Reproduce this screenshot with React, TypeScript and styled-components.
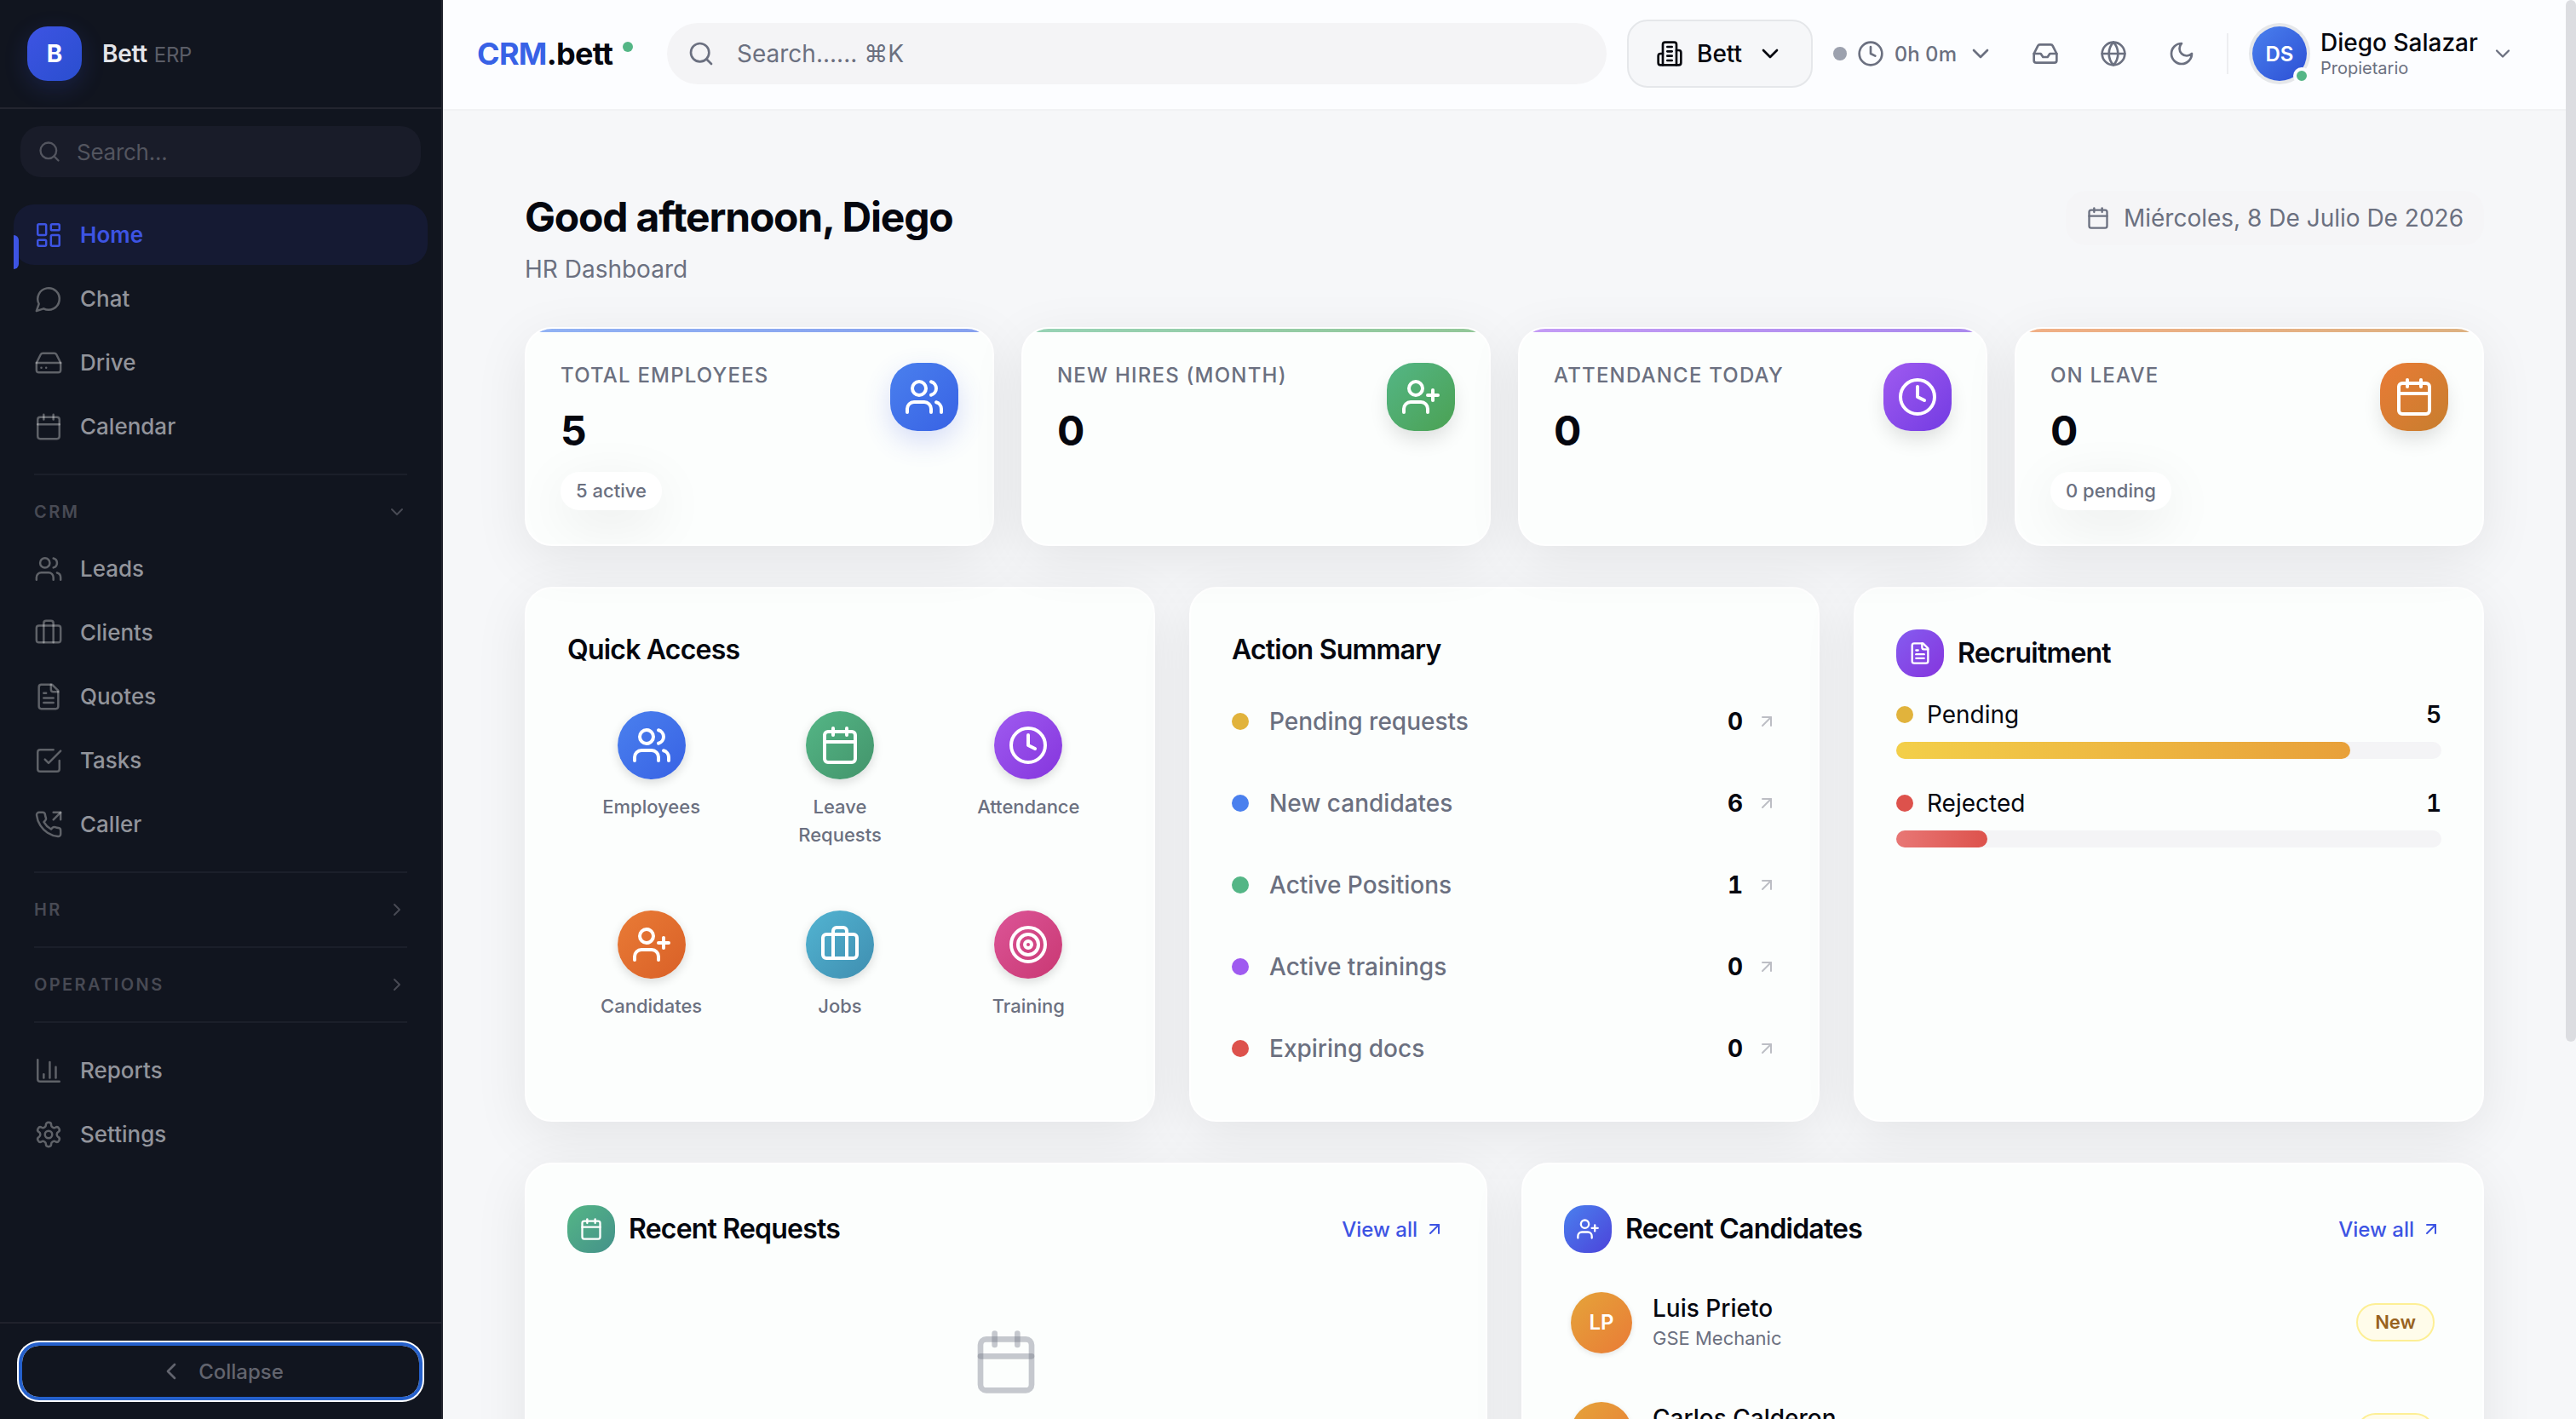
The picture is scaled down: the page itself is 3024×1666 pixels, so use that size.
import React from 'react'
import styled, { createGlobalStyle, css } from 'styled-components'
import {
    ArrowUpRight,
    Briefcase,
    Calendar,
    ChevronDown,
    ChevronLeft,
    ChevronRight,
    Clock,
    Globe,
    Search,
    Target,
    UserPlus,
    Users,
} from 'lucide-react'

const GlobalStyle = createGlobalStyle`
    *, *::before, *::after {
        box-sizing: border-box;
    }
    body {
        margin: 0;
        overflow: hidden;
        background: #f6f7f9;
        color: #05070f;
        font-family: Inter, "Liberation Sans", sans-serif;
        -webkit-font-smoothing: antialiased;
    }
    h1, h2, p {
        margin: 0;
    }
    button {
        font-family: inherit;
    }
    svg {
        flex-shrink: 0;
    }
`

const Shell = styled.div`
    display: flex;
    height: 1666px;
    overflow: hidden;
`

/* Sidebar */

const Sidebar = styled.aside`
    display: flex;
    flex-direction: column;
    width: 520px;
    flex-shrink: 0;
    background: #11151f;
    border-right: 2px solid #23252f;
`

const Brand = styled.div`
    display: flex;
    align-items: center;
    gap: 24px;
    height: 128px;
    padding: 0 32px;
    border-bottom: 2px solid #23252f;
`

const BrandMark = styled.div`
    display: grid;
    place-items: center;
    width: 64px;
    height: 64px;
    border-radius: 24px;
    background: linear-gradient(135deg, #3d54e3, #2a4ecf);
    box-shadow: 0 8px 28px rgba(61, 84, 227, 0.2);
    color: #fff;
    font-size: 28px;
    font-weight: 700;
`

const BrandName = styled.div`
    color: #e3e4e8;
    font-size: 28px;
    font-weight: 600;
    letter-spacing: -0.01em;
    span {
        margin-left: 8px;
        color: #5b5d67;
        font-size: 24px;
        font-weight: 400;
    }
`

const SideSearch = styled.div`
    display: flex;
    align-items: center;
    gap: 18px;
    height: 60px;
    margin: 20px 24px 32px;
    padding: 0 20px;
    border-radius: 24px;
    background: #191c29;
    color: #53555f;
    font-size: 26px;
    letter-spacing: -0.01em;
`

const Nav = styled.nav`
    display: flex;
    flex-direction: column;
    gap: 4px;
    padding: 0 16px;
`

const NavItem = styled.a<{ $active?: boolean }>`
    position: relative;
    display: flex;
    align-items: center;
    gap: 20px;
    height: 71px;
    padding: 0 24px;
    border-radius: 24px;
    color: #92949b;
    font-size: 26px;
    font-weight: 500;
    svg {
        color: rgba(255, 255, 255, 0.33);
    }
    ${props => props.$active && css`
        background: #151a33;
        color: #3d54e3;
        font-weight: 600;
        svg {
            color: #3d54e3;
        }
        &::before {
            content: '';
            position: absolute;
            left: 0;
            top: 50%;
            width: 6px;
            height: 40px;
            border-radius: 0 6px 6px 0;
            background: #3d54e3;
        }
    `}
`

const NavRule = styled.div<{ $top?: number, $bottom?: number }>`
    height: 2px;
    margin: ${props => props.$top || 0}px 40px ${props => props.$bottom || 0}px;
    background: #1b1f2a;
`

const NavHeading = styled.div<{ $height?: number }>`
    display: flex;
    align-items: center;
    justify-content: space-between;
    height: ${props => props.$height || 86}px;
    padding: 0 40px;
    color: #484a54;
    font-size: 20px;
    font-weight: 600;
    letter-spacing: 0.12em;
`

const NavSection = styled.div`
    margin-top: -12px;
`

const SideFooter = styled.div`
    display: flex;
    height: 114px;
    margin-top: auto;
    padding: 26px;
    border-top: 2px solid #20222c;
`

const CollapseButton = styled.button`
    display: flex;
    flex: 1;
    align-items: center;
    justify-content: center;
    gap: 16px;
    border: 0;
    border-radius: 20px;
    background: transparent;
    box-shadow: 0 0 0 4px #2560cb, 0 0 0 6px #fff;
    color: #62646e;
    font-size: 24px;
    font-weight: 500;
`

/* Top bar */

const Main = styled.div`
    display: flex;
    flex: 1;
    flex-direction: column;
    min-width: 0;
`

const TopBar = styled.header`
    display: flex;
    align-items: center;
    height: 130px;
    flex-shrink: 0;
    padding: 0 72px 2px 40px;
    border-bottom: 2px solid #f1f2f4;
    background: #fcfdff;
`

const Wordmark = styled.div`
    display: flex;
    width: 223px;
    font-size: 36px;
    font-weight: 700;
    letter-spacing: -0.02em;
    span {
        color: #3862e6;
    }
    i {
        width: 12px;
        height: 12px;
        margin: 8px 0 0 12px;
        border-radius: 50%;
        background: #54b686;
    }
`

const SearchField = styled.div`
    display: flex;
    align-items: center;
    gap: 26px;
    width: 1103px;
    height: 72px;
    padding: 0 24px;
    border-radius: 36px;
    background: #f4f4f6;
    color: #6b7080;
    font-size: 28px;
`

const CompanyButton = styled.button`
    display: flex;
    align-items: center;
    gap: 16px;
    width: 218px;
    height: 80px;
    margin-left: 24px;
    padding: 0 32px;
    border: 2px solid #e5e7ea;
    border-radius: 24px;
    background: #f6f7f9;
    color: #05070f;
    font-size: 28px;
    font-weight: 500;
    svg:last-child {
        margin-left: auto;
    }
`

const Timer = styled.div`
    display: flex;
    align-items: center;
    gap: 12px;
    width: 189px;
    margin-left: 24px;
    color: #6b7080;
    font-size: 24px;
    font-weight: 500;
    font-variant-numeric: tabular-nums;
    white-space: nowrap;
    i {
        width: 16px;
        height: 16px;
        border-radius: 50%;
        background: #9ca1ae;
    }
    svg:last-child {
        margin-left: auto;
    }
`

const IconBar = styled.div`
    display: flex;
    align-items: center;
    gap: 48px;
    margin-left: 44px;
    color: #6b7080;
`

const BarRule = styled.div`
    width: 2px;
    height: 48px;
    margin-left: 37px;
    background: #edeef1;
`

const Avatar = styled.div`
    position: relative;
    display: grid;
    place-items: center;
    width: 64px;
    height: 64px;
    margin-left: 28px;
    border-radius: 50%;
    background: linear-gradient(135deg, #4a80ee, #2c4fd4);
    box-shadow: 0 0 0 4px #e5e7ea;
    color: #fff;
    font-size: 24px;
    font-weight: 600;
    &::after {
        content: '';
        position: absolute;
        right: -4px;
        bottom: -4px;
        width: 20px;
        height: 20px;
        border: 4px solid #fcfdff;
        border-radius: 50%;
        background: #54b686;
    }
`

const Account = styled.div`
    margin-left: 16px;
    margin-right: auto;
    font-size: 28px;
    font-weight: 500;
    line-height: 34px;
    small {
        display: block;
        color: #6b7080;
        font-size: 20px;
        font-weight: 400;
        line-height: 26px;
    }
`

/* Page */

const Page = styled.main`
    display: flex;
    flex-direction: column;
    gap: 48px;
    padding: 94px 108px 0 96px;
`

const PageHead = styled.div`
    display: flex;
    align-items: flex-start;
    justify-content: space-between;
    height: 112px;
`

const Greeting = styled.h1`
    font-size: 48px;
    font-weight: 700;
    line-height: 62px;
    letter-spacing: -0.025em;
`

const Subtitle = styled.p`
    margin-top: 9px;
    color: #6b7080;
    font-size: 28px;
    line-height: 42px;
`

const DatePill = styled.div`
    display: flex;
    align-items: center;
    gap: 16px;
    height: 64px;
    padding: 0 24px;
    border-radius: 24px;
    background: #f5f5f7;
    color: #6b7080;
    font-size: 28px;
`

const Grid = styled.div<{ $columns: number, $gap: number }>`
    display: grid;
    grid-template-columns: repeat(${props => props.$columns}, 1fr);
    gap: ${props => props.$gap}px;
`

const Card = styled.section`
    border: 2px solid #fff;
    border-radius: 32px;
    background: #fcfefd;
    box-shadow: 0 16px 64px rgba(0, 0, 0, 0.08);
`

const StatCard = styled(Card)<{ $from: string, $to: string }>`
    position: relative;
    display: flex;
    justify-content: space-between;
    height: 257px;
    padding: 40px;
    overflow: hidden;
    &::before {
        content: '';
        position: absolute;
        inset: 0 0 auto;
        height: 4px;
        opacity: 0.6;
        background: linear-gradient(90deg, ${props => props.$from}, ${props => props.$to});
    }
`

const StatLabel = styled.div`
    color: #6b7080;
    font-size: 24px;
    font-weight: 500;
    line-height: 30px;
    letter-spacing: 0.05em;
`

const StatValue = styled.div`
    margin-top: 20px;
    font-size: 48px;
    font-weight: 700;
    line-height: 60px;
    letter-spacing: -0.025em;
`

const StatNote = styled.div`
    display: inline-block;
    height: 45px;
    margin-top: 18px;
    padding: 0 18px;
    border-radius: 22px;
    background: #fff;
    box-shadow: 0 16px 64px rgba(0, 0, 0, 0.08);
    color: #6b7080;
    font-size: 22px;
    font-weight: 500;
    line-height: 45px;
`

const Tile = styled.div<{ $from: string, $to: string, $size: number, $radius: string, $shadow?: string }>`
    display: grid;
    place-items: center;
    flex-shrink: 0;
    width: ${props => props.$size}px;
    height: ${props => props.$size}px;
    border-radius: ${props => props.$radius};
    background: linear-gradient(135deg, ${props => props.$from}, ${props => props.$to});
    box-shadow: ${props => props.$shadow || 'none'};
    color: #fff;
`

const Panel = styled(Card)<{ $height: number }>`
    height: ${props => props.$height}px;
    padding: 48px;
`

const PanelTitle = styled.h2`
    font-size: 32px;
    font-weight: 600;
    line-height: 48px;
    letter-spacing: -0.025em;
`

const PanelHead = styled.div`
    display: flex;
    align-items: center;
    gap: 16px;
    height: 56px;
`

const ViewAll = styled.a`
    display: flex;
    align-items: center;
    gap: 8px;
    margin-left: auto;
    color: #3d54e3;
    font-size: 24px;
    font-weight: 500;
`

const Shortcuts = styled.div`
    display: grid;
    grid-template-columns: repeat(3, 1fr);
    gap: 24px;
    margin-top: 24px;
`

const Shortcut = styled.div`
    display: flex;
    flex-direction: column;
    align-items: center;
    gap: 16px;
    padding: 24px;
    color: #6b7080;
    font-size: 22px;
    font-weight: 500;
    line-height: 33px;
    text-align: center;
`

const Actions = styled.div`
    display: flex;
    flex-direction: column;
    gap: 24px;
    margin-top: 24px;
`

const ActionRow = styled.div`
    display: flex;
    align-items: center;
    height: 72px;
    color: #6b7080;
    font-size: 28px;
    font-weight: 500;
    b {
        margin-left: auto;
        margin-right: 16px;
        color: #05070f;
        font-weight: 700;
        font-variant-numeric: tabular-nums;
    }
    svg {
        color: #bcbec4;
    }
`

const Dot = styled.i<{ $color: string, $gap: number }>`
    width: 20px;
    height: 20px;
    margin-right: ${props => props.$gap}px;
    border-radius: 50%;
    background: ${props => props.$color};
`

const Stage = styled.div`
    margin-top: 22px;
    & + & {
        margin-top: 30px;
    }
`

const StageHead = styled.div`
    display: flex;
    align-items: center;
    height: 44px;
    margin-bottom: 10px;
    font-size: 28px;
    b {
        margin-left: auto;
        font-weight: 600;
        font-variant-numeric: tabular-nums;
    }
`

const Track = styled.div`
    height: 20px;
    border-radius: 10px;
    background: #f4f4f6;
`

const Fill = styled.div<{ $from: string, $to: string }>`
    height: 100%;
    border-radius: 10px;
    background: linear-gradient(90deg, ${props => props.$from}, ${props => props.$to});
`

const Empty = styled.div`
    display: flex;
    justify-content: center;
    padding-top: 88px;
    color: rgba(107, 112, 128, 0.38);
`

const Candidates = styled.div`
    display: flex;
    flex-direction: column;
    margin-top: 17px;
`

const Candidate = styled.div`
    display: flex;
    align-items: center;
    height: 129px;
    padding: 0 8px;
`

const CandidateName = styled.div`
    margin-left: 24px;
    font-size: 28px;
    font-weight: 500;
    line-height: 38px;
    small {
        display: block;
        color: #6b7080;
        font-size: 22px;
        font-weight: 400;
        line-height: 33px;
    }
`

const Initials = styled(Tile)`
    font-size: 24px;
    font-weight: 600;
`

const Status = styled.div`
    height: 45px;
    margin-left: auto;
    padding: 0 20px;
    border: 2px solid #fdef95;
    border-radius: 23px;
    background: #fffcea;
    color: #98621f;
    font-size: 22px;
    font-weight: 600;
    line-height: 41px;
`

const ScrollThumb = styled.div`
    position: fixed;
    top: 0;
    right: 0;
    width: 12px;
    height: 1223px;
    border-radius: 6px;
    background: #dcdde1;
`

const iconPaths: { [name: string]: React.ReactNode } = {
    home: <><rect width="7" height="9" x="3" y="3" rx="1" /><rect width="7" height="5" x="14" y="3" rx="1" /><rect width="7" height="9" x="14" y="12" rx="1" /><rect width="7" height="5" x="3" y="16" rx="1" /></>,
    chat: <path d="M7.9 20A9 9 0 1 0 4 16.1L2 22Z" />,
    drive: <><line x1="22" x2="2" y1="12" y2="12" /><path d="M5.45 5.11 2 12v6a2 2 0 0 0 2 2h16a2 2 0 0 0 2-2v-6l-3.45-6.89A2 2 0 0 0 16.76 4H7.24a2 2 0 0 0-1.79 1.11z" /><line x1="6" x2="6.01" y1="16" y2="16" /><line x1="10" x2="10.01" y1="16" y2="16" /></>,
    calendar: <><path d="M8 2v4" /><path d="M16 2v4" /><rect width="18" height="18" x="3" y="4" rx="2" /><path d="M3 10h18" /></>,
    users: <><path d="M16 21v-2a4 4 0 0 0-4-4H6a4 4 0 0 0-4 4v2" /><circle cx="9" cy="7" r="4" /><path d="M22 21v-2a4 4 0 0 0-3-3.87" /><path d="M16 3.13a4 4 0 0 1 0 7.75" /></>,
    briefcase: <><path d="M16 20V4a2 2 0 0 0-2-2h-4a2 2 0 0 0-2 2v16" /><rect width="20" height="14" x="2" y="6" rx="2" /></>,
    file: <><path d="M15 2H6a2 2 0 0 0-2 2v16a2 2 0 0 0 2 2h12a2 2 0 0 0 2-2V7Z" /><path d="M14 2v4a2 2 0 0 0 2 2h4" /><path d="M10 9H8" /><path d="M16 13H8" /><path d="M16 17H8" /></>,
    task: <><path d="m9 11 3 3L22 4" /><path d="M21 12v7a2 2 0 0 1-2 2H5a2 2 0 0 1-2-2V5a2 2 0 0 1 2-2h11" /></>,
    phone: <><path d="m16 8 6-6" /><path d="M22 8V2h-6" /><path d="M22 16.92v3a2 2 0 0 1-2.18 2 19.79 19.79 0 0 1-8.63-3.07 19.5 19.5 0 0 1-6-6 19.79 19.79 0 0 1-3.07-8.67A2 2 0 0 1 4.11 2h3a2 2 0 0 1 2 1.72 12.84 12.84 0 0 0 .7 2.81 2 2 0 0 1-.45 2.11L8.09 9.91a16 16 0 0 0 6 6l1.27-1.27a2 2 0 0 1 2.11-.45 12.84 12.84 0 0 0 2.81.7A2 2 0 0 1 22 16.92z" /></>,
    chart: <><path d="M3 3v16a2 2 0 0 0 2 2h16" /><path d="M8 18v-3" /><path d="M13 18V5" /><path d="M18 18V9" /></>,
    settings: <><path d="M12.22 2h-.44a2 2 0 0 0-2 2v.18a2 2 0 0 1-1 1.73l-.43.25a2 2 0 0 1-2 0l-.15-.08a2 2 0 0 0-2.73.73l-.22.38a2 2 0 0 0 .73 2.73l.15.1a2 2 0 0 1 1 1.72v.51a2 2 0 0 1-1 1.74l-.15.09a2 2 0 0 0-.73 2.73l.22.38a2 2 0 0 0 2.73.73l.15-.08a2 2 0 0 1 2 0l.43.25a2 2 0 0 1 1 1.73V20a2 2 0 0 0 2 2h.44a2 2 0 0 0 2-2v-.18a2 2 0 0 1 1-1.73l.43-.25a2 2 0 0 1 2 0l.15.08a2 2 0 0 0 2.73-.73l.22-.39a2 2 0 0 0-.73-2.73l-.15-.08a2 2 0 0 1-1-1.74v-.5a2 2 0 0 1 1-1.74l.15-.09a2 2 0 0 0 .73-2.73l-.22-.38a2 2 0 0 0-2.73-.73l-.15.08a2 2 0 0 1-2 0l-.43-.25a2 2 0 0 1-1-1.73V4a2 2 0 0 0-2-2z" /><circle cx="12" cy="12" r="3" /></>,
    building: <><path d="M6 22V4a2 2 0 0 1 2-2h8a2 2 0 0 1 2 2v18Z" /><path d="M6 12H4a2 2 0 0 0-2 2v6a2 2 0 0 0 2 2h2" /><path d="M18 9h2a2 2 0 0 1 2 2v9a2 2 0 0 1-2 2h-2" /><path d="M10 6h4" /><path d="M10 10h4" /><path d="M10 14h4" /><path d="M10 18h4" /></>,
    inbox: <><polyline points="22 12 16 12 14 15 10 15 8 12 2 12" /><path d="M5.45 5.11 2 12v6a2 2 0 0 0 2 2h16a2 2 0 0 0 2-2v-6l-3.45-6.89A2 2 0 0 0 16.76 4H7.24a2 2 0 0 0-1.79 1.11z" /></>,
    moon: <path d="M12 3a6 6 0 0 0 9 9 9 9 0 1 1-9-9Z" />,
}

const Icon: React.FC<{ name: string, size: number, stroke?: number }> = ({ name, size, stroke = 2 }) => (
    <svg width={size} height={size} viewBox="0 0 24 24" fill="none" stroke="currentColor" strokeWidth={stroke} strokeLinecap="round" strokeLinejoin="round">
        {iconPaths[name]}
    </svg>
)

const mainLinks = [
    { label: 'Home', icon: 'home' },
    { label: 'Chat', icon: 'chat' },
    { label: 'Drive', icon: 'drive' },
    { label: 'Calendar', icon: 'calendar' },
]

const crmLinks = [
    { label: 'Leads', icon: 'users' },
    { label: 'Clients', icon: 'briefcase' },
    { label: 'Quotes', icon: 'file' },
    { label: 'Tasks', icon: 'task' },
    { label: 'Caller', icon: 'phone' },
]

const bottomLinks = [
    { label: 'Reports', icon: 'chart' },
    { label: 'Settings', icon: 'settings' },
]

const softShadow = '0 12px 24px -4px rgba(0, 0, 0, 0.14)'

const stats = [
    { label: 'TOTAL EMPLOYEES', value: 5, note: '5 active', icon: Users, from: '#4a80ee', to: '#3862e4', shadow: '0 12px 32px rgba(61, 84, 227, 0.2)' },
    { label: 'NEW HIRES (MONTH)', value: 0, icon: UserPlus, from: '#54b686', to: '#4ba153', shadow: softShadow },
    { label: 'ATTENDANCE TODAY', value: 0, icon: Clock, from: '#9f5bf0', to: '#733be2', shadow: softShadow },
    { label: 'ON LEAVE', value: 0, note: '0 pending', icon: Calendar, from: '#e97b36', to: '#c77e2e', shadow: softShadow },
]

const shortcuts = [
    { label: 'Employees', icon: Users, from: '#4a80ee', to: '#3862e4' },
    { label: 'Leave Requests', icon: Calendar, from: '#54b686', to: '#43946b' },
    { label: 'Attendance', icon: Clock, from: '#9f5bf0', to: '#8535dd' },
    { label: 'Candidates', icon: UserPlus, from: '#e97b36', to: '#d96027' },
    { label: 'Jobs', icon: Briefcase, from: '#52b4d2', to: '#3f8eb0' },
    { label: 'Training', icon: Target, from: '#dc5597', to: '#c93873' },
]

const actions = [
    { label: 'Pending requests', value: 0, color: '#e1b33c' },
    { label: 'New candidates', value: 6, color: '#4a80ee' },
    { label: 'Active Positions', value: 1, color: '#54b686' },
    { label: 'Active trainings', value: 0, color: '#9f5bf0' },
    { label: 'Expiring docs', value: 0, color: '#dd524c' },
]

const stages = [
    { label: 'Pending', count: 5, color: '#e1b33c', from: '#f3cf49', to: '#e8a03a' },
    { label: 'Rejected', count: 1, color: '#dd524c', from: '#e87775', to: '#dd524c' },
]

const candidates = [
    { name: 'Luis Prieto', initials: 'LP', role: 'GSE Mechanic' },
    { name: 'Carlos Calderon', initials: 'CC', role: 'GSE Mechanic' },
]

const NavLinks: React.FC<{ links: { label: string, icon: string }[], active?: string }> = ({ links, active }) => (
    <Nav>
        {links.map(link => (
            <NavItem key={link.label} $active={link.label === active}>
                <Icon name={link.icon} size={34} stroke={1.75} />
                {link.label}
            </NavItem>
        ))}
    </Nav>
)

const total = stages.reduce((sum, stage) => sum + stage.count, 0)

export default () => {
    return (
        <Shell>
            <GlobalStyle />
            <Sidebar>
                <Brand>
                    <BrandMark>B</BrandMark>
                    <BrandName>Bett<span>ERP</span></BrandName>
                </Brand>
                <SideSearch>
                    <Search size={28} />
                    Search...
                </SideSearch>
                <NavLinks links={mainLinks} active="Home" />
                <NavRule $top={20} />
                <NavHeading>CRM<ChevronDown size={24} /></NavHeading>
                <NavSection><NavLinks links={crmLinks} /></NavSection>
                <NavRule $top={20} />
                <NavHeading>HR<ChevronRight size={24} /></NavHeading>
                <NavRule />
                <NavHeading>OPERATIONS<ChevronRight size={24} /></NavHeading>
                <NavRule $bottom={20} />
                <NavLinks links={bottomLinks} />
                <SideFooter>
                    <CollapseButton><ChevronLeft size={32} />Collapse</CollapseButton>
                </SideFooter>
            </Sidebar>

            <Main>
                <TopBar>
                    <Wordmark><span>CRM</span>.bett<i /></Wordmark>
                    <SearchField><Search size={32} />Search...... ⌘K</SearchField>
                    <CompanyButton><Icon name="building" size={32} />Bett<ChevronDown size={32} /></CompanyButton>
                    <Timer><i /><Clock size={32} />0h 0m<ChevronDown size={32} /></Timer>
                    <IconBar>
                        <Icon name="inbox" size={32} />
                        <Globe size={32} />
                        <Icon name="moon" size={32} />
                    </IconBar>
                    <BarRule />
                    <Avatar>DS</Avatar>
                    <Account>Diego Salazar<small>Propietario</small></Account>
                    <ChevronDown size={28} color="#6b7080" />
                </TopBar>

                <Page>
                    <PageHead>
                        <div>
                            <Greeting>Good afternoon, Diego</Greeting>
                            <Subtitle>HR Dashboard</Subtitle>
                        </div>
                        <DatePill><Icon name="calendar" size={28} />Miércoles, 8 De Julio De 2026</DatePill>
                    </PageHead>

                    <Grid $columns={4} $gap={32}>
                        {stats.map(stat => (
                            <StatCard key={stat.label} $from={stat.from} $to={stat.to}>
                                <div>
                                    <StatLabel>{stat.label}</StatLabel>
                                    <StatValue>{stat.value}</StatValue>
                                    {stat.note && <StatNote>{stat.note}</StatNote>}
                                </div>
                                <Tile $from={stat.from} $to={stat.to} $size={80} $radius="32px" $shadow={stat.shadow}>
                                    <stat.icon size={48} />
                                </Tile>
                            </StatCard>
                        ))}
                    </Grid>

                    <Grid $columns={3} $gap={40}>
                        <Panel $height={628}>
                            <PanelTitle>Quick Access</PanelTitle>
                            <Shortcuts>
                                {shortcuts.map(item => (
                                    <Shortcut key={item.label}>
                                        <Tile $from={item.from} $to={item.to} $size={80} $radius="50%" $shadow="0 4px 12px rgba(0, 0, 0, 0.14)">
                                            <item.icon size={48} />
                                        </Tile>
                                        {item.label}
                                    </Shortcut>
                                ))}
                            </Shortcuts>
                        </Panel>
                        <Panel $height={628}>
                            <PanelTitle>Action Summary</PanelTitle>
                            <Actions>
                                {actions.map(action => (
                                    <ActionRow key={action.label}>
                                        <Dot $color={action.color} $gap={24} />
                                        {action.label}
                                        <b>{action.value}</b>
                                        <ArrowUpRight size={24} />
                                    </ActionRow>
                                ))}
                            </Actions>
                        </Panel>
                        <Panel $height={628}>
                            <PanelHead>
                                <Tile $from="#855cf0" $to="#8535dd" $size={56} $radius="24px"><Icon name="file" size={28} /></Tile>
                                <PanelTitle>Recruitment</PanelTitle>
                            </PanelHead>
                            {stages.map(stage => (
                                <Stage key={stage.label}>
                                    <StageHead>
                                        <Dot $color={stage.color} $gap={16} />
                                        {stage.label}
                                        <b>{stage.count}</b>
                                    </StageHead>
                                    <Track>
                                        <Fill $from={stage.from} $to={stage.to} style={{ width: `${stage.count / total * 100}%` }} />
                                    </Track>
                                </Stage>
                            ))}
                        </Panel>
                    </Grid>

                    <Grid $columns={2} $gap={40}>
                        <Panel $height={628}>
                            <PanelHead>
                                <Tile $from="#54b686" $to="#44918a" $size={56} $radius="24px"><Icon name="calendar" size={28} /></Tile>
                                <PanelTitle>Recent Requests</PanelTitle>
                                <ViewAll>View all<ArrowUpRight size={24} /></ViewAll>
                            </PanelHead>
                            <Empty><Icon name="calendar" size={80} /></Empty>
                        </Panel>
                        <Panel $height={628}>
                            <PanelHead>
                                <Tile $from="#4a80ee" $to="#4c43da" $size={56} $radius="24px"><UserPlus size={28} /></Tile>
                                <PanelTitle>Recent Candidates</PanelTitle>
                                <ViewAll>View all<ArrowUpRight size={24} /></ViewAll>
                            </PanelHead>
                            <Candidates>
                                {candidates.map(person => (
                                    <Candidate key={person.name}>
                                        <Initials $from="#e5a43a" $to="#e97b36" $size={72} $radius="50%" $shadow="0 2px 6px rgba(0, 0, 0, 0.1)">
                                            {person.initials}
                                        </Initials>
                                        <CandidateName>{person.name}<small>{person.role}</small></CandidateName>
                                        <Status>New</Status>
                                    </Candidate>
                                ))}
                            </Candidates>
                        </Panel>
                    </Grid>
                </Page>
            </Main>
            <ScrollThumb />
        </Shell>
    )
}
